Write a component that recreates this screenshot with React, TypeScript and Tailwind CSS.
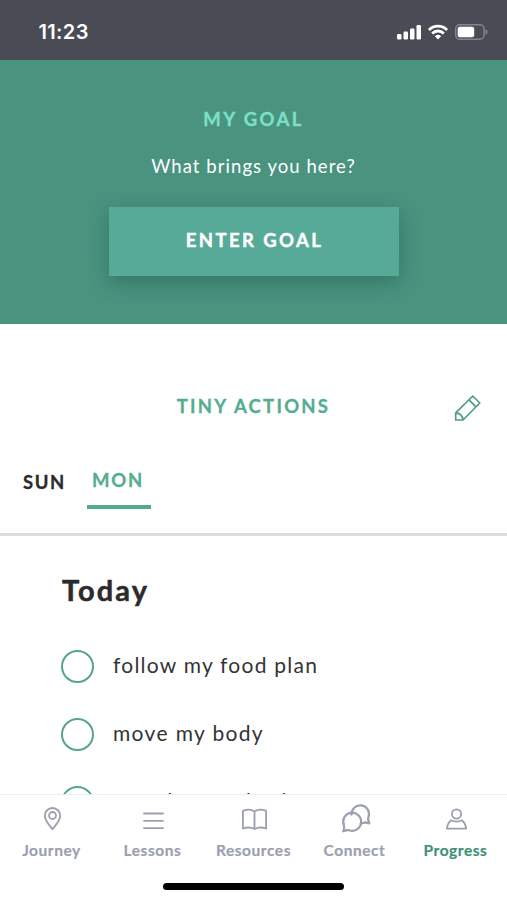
import type { ReactNode } from 'react';

const actions = [
  { label: 'follow my food plan', spacing: 'tracking-[1.24px] pb-[4px]' },
  { label: 'move my body', spacing: 'tracking-[1.35px] pb-[4px]' },
  { label: 'practice gratitude', spacing: 'tracking-[1.4px] pb-[3px]' },
];

function StatusBar() {
  return (
    <header className="flex h-[60px] shrink-0 items-center justify-between bg-[#4a4c55] pl-[38.5px] pr-[19px] pt-[4px] text-white">
      <span className="font-[Inter] text-[20px] font-semibold leading-6 tracking-[0.35px]">11:23</span>
      <div className="flex items-center gap-[7px]">
        <svg width="24" height="16" viewBox="0 0 24 16" fill="currentColor">
          <rect x="0" y="10" width="4.5" height="5.5" rx="1.2" />
          <rect x="6.5" y="7.5" width="4.5" height="8" rx="1.2" />
          <rect x="13" y="4.5" width="4.5" height="11" rx="1.2" />
          <rect x="19.5" y="1" width="4.5" height="14.5" rx="1.2" />
        </svg>
        <svg width="20" height="16" viewBox="0 0 20 16" fill="none" stroke="currentColor" strokeWidth="2.8">
          <path d="M.9 6C6 .9 14 .9 19.1 6" />
          <path d="M4.2 9.4C7.4 6.2 12.6 6.2 15.8 9.4" />
          <path d="M10 15.4 6.9 12.2Q10 9.4 13.1 12.2Z" fill="currentColor" stroke="none" />
        </svg>
        <svg width="33" height="16" viewBox="0 0 33 16">
          <rect x=".7" y=".7" width="28.3" height="14.6" rx="4" fill="none" stroke="#85868d" strokeWidth="1.4" />
          <rect x="2.7" y="2.7" width="16.5" height="10.6" rx="2" fill="white" />
          <path d="M30.5 5.2c2.8 1.2 2.8 4.4 0 5.6z" fill="#85868d" />
        </svg>
      </div>
    </header>
  );
}

function GoalPanel() {
  return (
    <section className="flex h-[264px] shrink-0 flex-col items-center bg-[#49937f] pt-[47px]">
      <h2 className="text-[18.5px] font-bold leading-6 tracking-[2.4px] text-[#7de0c6] [-webkit-text-stroke:0.3px]">MY GOAL</h2>
      <p className="mt-[23px] text-[18.5px] leading-6 tracking-[1.05px] text-white">What brings you here?</p>
      <button className="mt-[29px] h-[69px] w-[290px] bg-[#57aa97] pb-[3px] pl-[2px] text-[18.5px] font-bold leading-6 tracking-[2.4px] text-white shadow-[0_6px_18px_rgba(20,75,60,0.4)] [-webkit-text-stroke:0.4px]">
        ENTER GOAL
      </button>
    </section>
  );
}

function PencilIcon() {
  return (
    <svg width="28" height="28" viewBox="0 0 28 28" fill="none" stroke="#519b86" strokeWidth="1.7" strokeLinejoin="round">
      <path d="M1.7 18.8 18.8 2 25.8 9 9 26H1.7Z" />
      <path d="m15 5.8 7 7M2 18.8c4.1.5 6.7 3.3 7 7.2" />
    </svg>
  );
}

function TinyActions() {
  return (
    <main className="flex min-h-0 flex-1 flex-col overflow-hidden bg-white">
      <div className="grid shrink-0 grid-cols-[1fr_auto_1fr] items-center pt-[70px]">
        <h2 className="col-start-2 pb-[4px] text-[18.5px] font-bold leading-6 tracking-[2.25px] text-[#55ad90] [-webkit-text-stroke:0.3px]">TINY ACTIONS</h2>
        <button aria-label="Edit tiny actions" className="mr-[25px] justify-self-end">
          <PencilIcon />
        </button>
      </div>
      <nav className="mt-[46px] flex h-[68px] shrink-0 items-start border-b-[3px] border-[#dcdcdc] pl-[23px] text-[18.5px] font-bold leading-6 [-webkit-text-stroke:0.3px]">
        <button className="mt-[2px] w-[64px] text-left tracking-[1.6px] text-[#2b2b2d]">SUN</button>
        <button className="h-[41px] w-[64px] border-b-4 border-[#55a98f] pb-[13px] pl-[5px] text-left tracking-[1.8px] text-[#55ad90]">MON</button>
      </nav>
      <h1 className="ml-[62px] mt-[36px] shrink-0 text-[29px] font-bold leading-[36px] tracking-[2.1px] text-[#2b2b2d] [-webkit-text-stroke:0.5px]">Today</h1>
      <ul className="mt-[42px] flex shrink-0 flex-col gap-[35px] pl-[61px]">
        {actions.map((action) => (
          <li key={action.label} className="flex h-[33px] items-center gap-[19px]">
            <span className="size-[33px] shrink-0 rounded-full border-2 border-[#55a58d]" />
            <span className={'text-[21px] leading-6 text-[#333335] ' + action.spacing}>{action.label}</span>
          </li>
        ))}
      </ul>
    </main>
  );
}

function Tab({ label, active = false, children }: { label: string; active?: boolean; children: ReactNode }) {
  return (
    <button className="flex w-[101px] flex-col items-center text-[#9c9fb0]">
      <span className="flex h-[32px] items-center justify-center">
        <svg width="32" height="32" viewBox="0.5 0.5 32 32" fill="none" stroke="currentColor" strokeWidth="1.8" strokeLinecap="round" strokeLinejoin="round">
          {children}
        </svg>
      </span>
      <span className={'mt-[5px] text-[15.5px] font-bold leading-5 tracking-[0.55px] [-webkit-text-stroke:0.2px] ' + (active ? 'text-[#3f9078]' : '')}>{label}</span>
    </button>
  );
}

function TabBar() {
  return (
    <footer className="flex h-[106px] shrink-0 flex-col items-center justify-between border-t border-[#eeeeef] bg-white pb-[10px] pt-[8px]">
      <div className="flex w-full justify-center">
        <Tab label="Journey">
          <path d="M17 26.8C13.3 21.8 9.3 18 9.3 13.2a7.7 7.7 0 0 1 15.4 0c0 4.8-4 8.6-7.7 13.6Z" />
          <circle cx="17" cy="13" r="3.5" />
        </Tab>
        <Tab label="Lessons">
          <path d="M7.5 11h19M7.5 18.3h19M7.5 25.7h19" />
        </Tab>
        <Tab label="Resources">
          <path d="M17 9C14 6.9 9 7 5.4 8.4V26c3.6-1.2 8.6-1.2 11.6.5 3-1.7 8-1.7 11.6-.5V8.4C25 7 20 6.9 17 9ZM17 9v17.5" />
        </Tab>
        <Tab label="Connect">
          <g strokeWidth="2.2" transform="translate(.6 .4)">
            <path d="M12.5 11.8a8.7 8.7 0 1 1 17.2 1c-.2 1.5-.9 2.6-.6 4l1.2 3.6-4.4-.9c-1.4.8-2.7 1-4.3.9" />
            <path d="M4.2 28.4c1-2.3 1.4-3.6.6-6a9 9 0 1 1 5.2 4.9c-2-.4-3.6.2-5.8 1.1Z" />
          </g>
        </Tab>
        <Tab label="Progress" active>
          <circle cx="17" cy="11.5" r="4.6" />
          <path d="M11.6 17.8c-2.6 2-3.8 4.6-4.2 8.4h19.2c-.4-3.8-1.6-6.4-4.2-8.4-3 1.5-7.8 1.5-10.8 0Z" />
        </Tab>
      </div>
      <div className="h-[7px] w-[181px] rounded-full bg-black" />
    </footer>
  );
}

export default function App() {
  return (
    <div className="flex h-[900px] w-[507px] flex-col overflow-hidden bg-white font-[Lato,sans-serif]">
      <StatusBar />
      <GoalPanel />
      <TinyActions />
      <TabBar />
    </div>
  );
}
